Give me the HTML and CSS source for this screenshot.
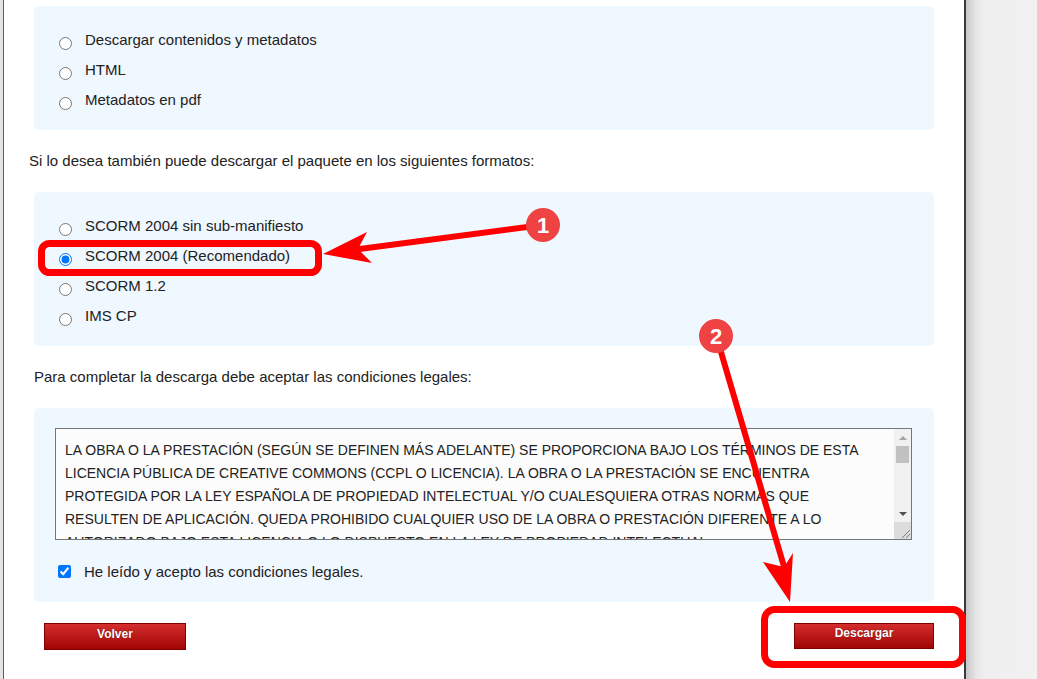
FILE: index.html
```html
<!DOCTYPE html>
<html lang="es">
<head>
<meta charset="utf-8">
<title>Descargar</title>
<link rel="stylesheet" href="styles.css">
</head>
<body>
<div class="frame">
  <div class="edge-left"></div>
  <main class="dialog">
    <section class="panel">
      <label class="opt"><input type="radio" name="tipo"><span>Descargar contenidos y metadatos</span></label>
      <label class="opt"><input type="radio" name="tipo"><span>HTML</span></label>
      <label class="opt"><input type="radio" name="tipo"><span>Metadatos en pdf</span></label>
    </section>
    <p class="note note-shift">Si lo desea también puede descargar el paquete en los siguientes formatos:</p>
    <section class="panel">
      <label class="opt"><input type="radio" name="formato"><span>SCORM 2004 sin sub-manifiesto</span></label>
      <label class="opt"><input type="radio" name="formato" checked><span>SCORM 2004 (Recomendado)</span></label>
      <label class="opt"><input type="radio" name="formato"><span>SCORM 1.2</span></label>
      <label class="opt"><input type="radio" name="formato"><span>IMS CP</span></label>
    </section>
    <p class="note">Para completar la descarga debe aceptar las condiciones legales:</p>
    <section class="panel legal">
      <div class="terms-box">
        <textarea class="terms" readonly>LA OBRA O LA PRESTACIÓN (SEGÚN SE DEFINEN MÁS ADELANTE) SE PROPORCIONA BAJO LOS TÉRMINOS DE ESTA
LICENCIA PÚBLICA DE CREATIVE COMMONS (CCPL O LICENCIA). LA OBRA O LA PRESTACIÓN SE ENCUENTRA
PROTEGIDA POR LA LEY ESPAÑOLA DE PROPIEDAD INTELECTUAL Y/O CUALESQUIERA OTRAS NORMAS QUE
RESULTEN DE APLICACIÓN. QUEDA PROHIBIDO CUALQUIER USO DE LA OBRA O PRESTACIÓN DIFERENTE A LO
AUTORIZADO BAJO ESTA LICENCIA O LO DISPUESTO EN LA LEY DE PROPIEDAD INTELECTUAL.
MEDIANTE EL EJERCICIO DE CUALQUIER DERECHO SOBRE LA OBRA O LA PRESTACIÓN, USTED ACEPTA Y
CONSIENTE LAS LIMITACIONES Y OBLIGACIONES DE ESTA LICENCIA.</textarea>
        <div class="sbar" aria-hidden="true">
          <div class="sb-btn"><span class="tri-up"></span></div>
          <div class="sb-track"><div class="sb-thumb"></div></div>
          <div class="sb-btn"><span class="tri-down"></span></div>
          <div class="sb-corner">
            <svg width="17" height="17" viewBox="0 0 17 17"><path d="M8 16 L16 8 M12 16 L16 12" stroke="#7d7d7d" stroke-width="1" fill="none"/></svg>
          </div>
        </div>
      </div>
      <label class="check"><input type="checkbox" checked><span>He leído y acepto las condiciones legales.</span></label>
    </section>
    <div class="actions">
      <button class="btn btn-back" type="button">Volver</button>
      <button class="btn btn-go" type="button">Descargar</button>
    </div>
  </main>
  <div class="backdrop"></div>
</div>
<svg class="annot" width="1037" height="679" viewBox="0 0 1037 679">
  <rect x="41.5" y="243.5" width="277" height="29" rx="8" fill="none" stroke="#ff0000" stroke-width="7"/>
  <rect x="764.5" y="609.5" width="198" height="55" rx="10" fill="none" stroke="#ff0000" stroke-width="7"/>
  <line x1="352" y1="250" x2="535" y2="226" stroke="#ff0000" stroke-width="6" stroke-linecap="round"/>
  <polygon points="323,254 367,232 358,249 372,263" fill="#ff0000"/>
  <line x1="716" y1="335" x2="785" y2="570" stroke="#ff0000" stroke-width="6" stroke-linecap="round"/>
  <polygon points="790,602 763,562 784,567 793,553" fill="#ff0000"/>
  <circle cx="543" cy="225" r="17" fill="#ef4242"/>
  <text class="badge-num" x="543" y="233" text-anchor="middle">1</text>
  <circle cx="716" cy="336" r="17" fill="#ef4242"/>
  <text class="badge-num" x="716" y="344" text-anchor="middle">2</text>
</svg>
</body>
</html>
```

FILE: styles.css
```css
html, body {
  margin: 0;
  padding: 0;
}

body {
  font-family: "Liberation Sans", Arial, sans-serif;
  color: #222;
  background: #f1f1f1;
  height: 679px;
  overflow: hidden;
  position: relative;
}

.frame {
  display: flex;
  height: 679px;
}

.edge-left {
  width: 3px;
  background: #e4e4e4;
  border-right: 1px solid #5e5e5e;
  flex: none;
}

.dialog {
  flex: none;
  width: 900px;
  padding: 6px 30px 0;
  background: #ffffff;
  border-right: 2px solid #3a3a3a;
}

.backdrop {
  flex: 1;
  background: linear-gradient(to right, #c6c6c6 0px, #e6e6e6 10px, #efefef 18px, #f1f1f1 100%);
}

.panel {
  background: #eff7ff;
  border-radius: 5px;
  padding: 18px 0 16px;
}

.opt {
  display: flex;
  align-items: center;
  height: 30px;
  padding-left: 25px;
  font-size: 15px;
}

.opt input {
  width: 13px;
  height: 13px;
  margin: 8px 13px 0 0;
}

.note {
  margin: 0;
  font-size: 15px;
  line-height: 20px;
  padding: 21px 0;
}

.note-shift {
  margin-left: -5px;
}

.legal {
  padding: 20px 22px 16px 21px;
}

.terms-box {
  display: flex;
  box-sizing: border-box;
  height: 112px;
  border: 1px solid #767676;
  background: #fcfcfc;
}

.terms {
  flex: 1;
  min-width: 0;
  margin: 0;
  padding: 10px 9px;
  border: none;
  outline: none;
  background: transparent;
  color: #222;
  font-family: "Liberation Sans", Arial, sans-serif;
  font-size: 14px;
  line-height: 23px;
  white-space: pre-wrap;
  overflow: hidden;
  resize: none;
}

.sbar {
  flex: none;
  width: 17px;
  display: flex;
  flex-direction: column;
  background: #f1f1f1;
}

.sb-btn {
  height: 17px;
  display: flex;
  align-items: center;
  justify-content: center;
}

.tri-up {
  width: 0;
  height: 0;
  border-left: 4px solid transparent;
  border-right: 4px solid transparent;
  border-bottom: 4px solid #a3a3a3;
}

.tri-down {
  width: 0;
  height: 0;
  border-left: 4px solid transparent;
  border-right: 4px solid transparent;
  border-top: 4px solid #505050;
}

.sb-track {
  flex: 1;
  padding: 0 2px;
}

.sb-thumb {
  height: 17px;
  background: #c1c1c1;
}

.sb-corner {
  height: 17px;
  background: #dcdcdc;
}

.sb-corner svg {
  display: block;
}

.check {
  display: flex;
  align-items: center;
  height: 30px;
  margin-top: 16px;
  padding-left: 3px;
  font-size: 15px;
}

.check input {
  width: 13px;
  height: 13px;
  margin: 1px 13px 0 0;
}

.actions {
  display: flex;
  justify-content: space-between;
  align-items: flex-start;
  margin-top: 21px;
  padding-left: 10px;
}

.btn {
  box-sizing: border-box;
  height: 27px;
  padding: 0 0 6px;
  border: 1px solid #7e0000;
  background: linear-gradient(#d42d2d, #a10505);
  color: #ffffff;
  font-family: "Liberation Sans", Arial, sans-serif;
  font-weight: bold;
  font-size: 12px;
  text-shadow: 0 0 1px #5a0000;
  cursor: pointer;
}

.btn-back {
  width: 142px;
}

.btn-go {
  width: 140px;
  height: 26px;
}

.annot {
  position: absolute;
  top: 0;
  left: 0;
  pointer-events: none;
}

.badge-num {
  font-family: "Liberation Sans", Arial, sans-serif;
  font-weight: bold;
  font-size: 22px;
  fill: #ffffff;
}
```
